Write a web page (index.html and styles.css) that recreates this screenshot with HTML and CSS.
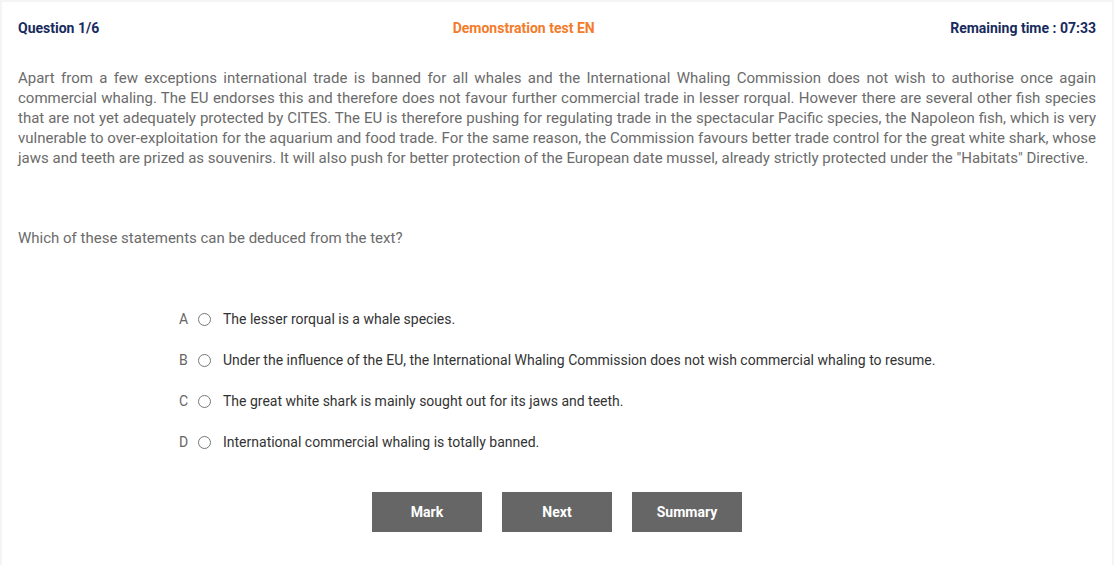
FILE: index.html
```
<!DOCTYPE html>
<html lang="en">
<head>
    <meta charset="UTF-8">
    <meta name="viewport" content="width=device-width, initial-scale=1.0">
    <title>Demonstration test EN</title>
    <link rel="stylesheet" href="styles.css">
</head>
<body>
    <div class="card">
        <div class="top-bar">
            <span class="counter">Question 1/6</span>
            <span class="test-name">Demonstration test EN</span>
            <span class="timer">Remaining time : 07:33</span>
        </div>

        <p class="passage">Apart from a few exceptions international trade is banned for all whales and the International Whaling Commission does not wish to authorise once again commercial whaling. The EU endorses this and therefore does not favour further commercial trade in lesser rorqual. However there are several other fish species that are not yet adequately protected by CITES. The EU is therefore pushing for regulating trade in the spectacular Pacific species, the Napoleon fish, which is very vulnerable to over-exploitation for the aquarium and food trade. For the same reason, the Commission favours better trade control for the great white shark, whose jaws and teeth are prized as souvenirs. It will also push for better protection of the European date mussel, already strictly protected under the "Habitats" Directive.</p>

        <p class="question">Which of these statements can be deduced from the text?</p>

        <form class="answers">
            <label class="answer"><span class="letter">A</span><input type="radio" name="answer"><span>The lesser rorqual is a whale species.</span></label>
            <label class="answer"><span class="letter">B</span><input type="radio" name="answer"><span>Under the influence of the EU, the International Whaling Commission does not wish commercial whaling to resume.</span></label>
            <label class="answer"><span class="letter">C</span><input type="radio" name="answer"><span>The great white shark is mainly sought out for its jaws and teeth.</span></label>
            <label class="answer"><span class="letter">D</span><input type="radio" name="answer"><span>International commercial whaling is totally banned.</span></label>
        </form>

        <div class="actions">
            <button type="button">Mark</button>
            <button type="button">Next</button>
            <button type="button">Summary</button>
        </div>
    </div>
</body>
</html>
```

FILE: styles.css
```
body {
    font-family: Roboto, Arial, sans-serif;
    margin: 0;
    padding: 2px 2px 0;
    background-color: #f4f4f4;
}
.card {
    box-sizing: border-box;
    background-color: #fff;
    padding: 0 16px 20px;
    min-height: calc(100vh - 2px);
}
.top-bar {
    display: flex;
    justify-content: space-between;
    align-items: center;
    height: 52px;
    font-size: 14px;
    font-weight: bold;
    color: #172b5e;
}
.top-bar .test-name {
    color: #f47b2a;
    margin-left: -2px;
}
.passage {
    margin: 14px 0 0;
    font-size: 15px;
    line-height: 20px;
    color: #6b6b6b;
    text-align: justify;
}
.question {
    margin: 60px 0 0;
    font-size: 15px;
    line-height: 20px;
    color: #6b6b6b;
}
.answers {
    margin: 61px 0 0;
    padding-left: 161px;
    display: flex;
    flex-direction: column;
    gap: 21px;
}
.answer {
    display: flex;
    align-items: center;
    height: 20px;
    font-size: 14px;
    color: #333;
}
.answer .letter {
    color: #666;
    width: 19px;
}
.answer input {
    appearance: none;
    width: 13px;
    height: 13px;
    margin: 0 12px 0 0;
    border: 1px solid #777;
    border-radius: 50%;
}
.actions {
    display: flex;
    justify-content: center;
    gap: 20px;
    margin-top: 40px;
}
button {
    width: 110px;
    height: 40px;
    border: none;
    background-color: #666;
    color: white;
    font-family: Roboto, Arial, sans-serif;
    font-size: 14px;
    font-weight: bold;
    cursor: pointer;
}
```
